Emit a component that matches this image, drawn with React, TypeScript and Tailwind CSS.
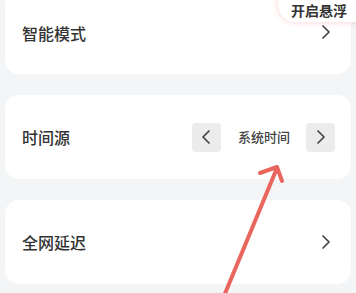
import React from "react";

const Chevron = ({ dir = "right" }: { dir?: "left" | "right" }) => (
  <svg width="10" height="16" viewBox="0 0 10 16" fill="none">
    {dir === "right" ? (
      <path d="M2 2l6 6-6 6" stroke="#444" strokeWidth="1.7" strokeLinecap="round" strokeLinejoin="round" />
    ) : (
      <path d="M8 2L2 8l6 6" stroke="#444" strokeWidth="1.7" strokeLinecap="round" strokeLinejoin="round" />
    )}
  </svg>
);

export default function App() {
  const font = { fontFamily: '"Noto Sans CJK SC", "Noto Sans", sans-serif' };
  return (
    <div className="relative w-[356px] h-[293px] overflow-hidden bg-[#f3f5f6]" style={font}>
      <div className="flex flex-col gap-[21px] px-[5px] mt-[-10px]">
        <div className="h-[84px] rounded-[14px] bg-white flex items-center justify-between pl-[17px] pr-[20px]">
          <span className="text-[16px] font-medium text-[#333] pt-[2px]">智能模式</span>
          <Chevron />
        </div>
        <div className="h-[84px] rounded-[14px] bg-white flex items-center justify-between pl-[17px] pr-[16px]">
          <span className="text-[16px] font-medium text-[#333]">时间源</span>
          <div className="flex items-center">
            <div className="w-[29px] h-[29px] rounded-[4px] bg-[#ececec] flex items-center justify-center">
              <Chevron dir="left" />
            </div>
            <span className="text-[13px] font-medium text-[#444] ml-[17px] mr-[16px]">系统时间</span>
            <div className="w-[29px] h-[29px] rounded-[4px] bg-[#ececec] flex items-center justify-center">
              <Chevron />
            </div>
          </div>
        </div>
        <div className="h-[84px] rounded-[14px] bg-white flex items-center justify-between pl-[17px] pr-[20px]">
          <span className="text-[16px] font-medium text-[#333]">全网延迟</span>
          <Chevron />
        </div>
      </div>

      <div className="absolute left-[278px] top-[-12px] w-[100px] h-[34px] rounded-l-full bg-white shadow-[0_0_6px_rgba(240,120,120,0.35)] flex items-end pl-[13px] pb-[4px]">
        <span className="text-[14px] font-bold text-[#333] leading-[16px] whitespace-nowrap">开启悬浮</span>
      </div>

      <svg className="absolute inset-0 pointer-events-none" width="356" height="293" viewBox="0 0 356 293">
        <path d="M224 296 L277 168" stroke="#e9665e" strokeWidth="4" strokeLinecap="round" fill="none" />
        <path d="M260 173 L277 167 L282 181" stroke="#e9665e" strokeWidth="4" strokeLinecap="round" strokeLinejoin="round" fill="none" />
      </svg>
    </div>
  );
}
